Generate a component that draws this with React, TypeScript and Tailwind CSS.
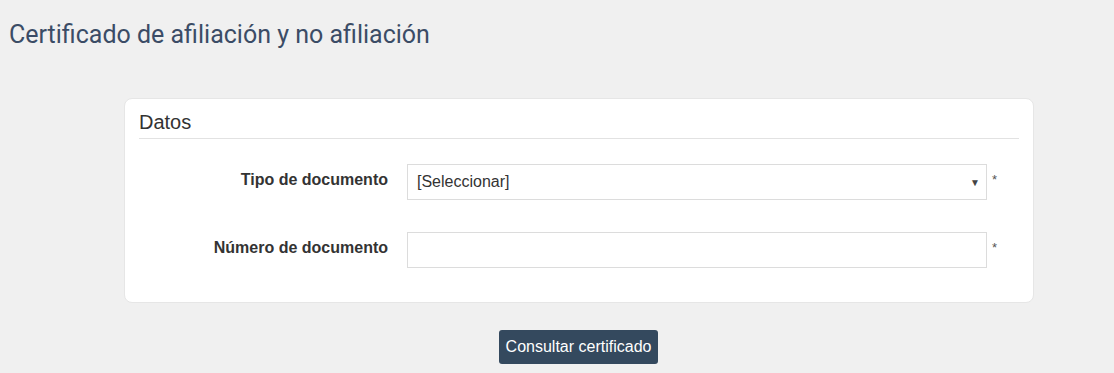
export default function App() {
  return (
    <div className="min-h-[373px] w-full bg-[#f0f0f0] pt-[18px]" style={{ fontFamily: '"Liberation Sans", Arial, sans-serif' }}>
      <h1 className="pl-[9px] text-[25px] leading-[34px] text-[#3b4c66]" style={{ fontFamily: 'Roboto, "Liberation Sans", sans-serif' }}>
        Certificado de afiliación y no afiliación
      </h1>
      <div className="ml-[124px] mt-[46px] w-[910px] rounded-lg border border-[#e6e6e6] bg-white px-[14px] pt-[10px] pb-[34px]">
        <div className="border-b border-[#e2e2e2] pb-[3px] text-[20px] leading-[26px] text-[#333]">Datos</div>
        <div className="mt-[25px] flex flex-col gap-[32px]">
          <div className="flex items-center">
            <label className="-mt-[4px] w-[249px] text-right text-[16px] font-bold text-[#333]">Tipo de documento</label>
            <div className="ml-[19px] flex h-[36px] w-[580px] items-center justify-between border border-[#dcdcdc] bg-white pl-[9px] pr-[6px] text-[16px] text-[#333]">
              <span>[Seleccionar]</span>
              <span className="text-[10px] text-[#444]">▼</span>
            </div>
            <span className="ml-[5px] -mt-[4px] text-[13px] text-[#555]">*</span>
          </div>
          <div className="flex items-center">
            <label className="-mt-[4px] w-[249px] text-right text-[16px] font-bold text-[#333]">Número de documento</label>
            <div className="ml-[19px] h-[36px] w-[580px] border border-[#dcdcdc] bg-white" />
            <span className="ml-[5px] -mt-[4px] text-[13px] text-[#555]">*</span>
          </div>
        </div>
      </div>
      <div className="mt-[27px] flex justify-center pl-[43px]">
        <button className="h-[34px] rounded-[3px] bg-[#34495e] px-[7px] text-[16px] text-white">Consultar certificado</button>
      </div>
    </div>
  );
}
